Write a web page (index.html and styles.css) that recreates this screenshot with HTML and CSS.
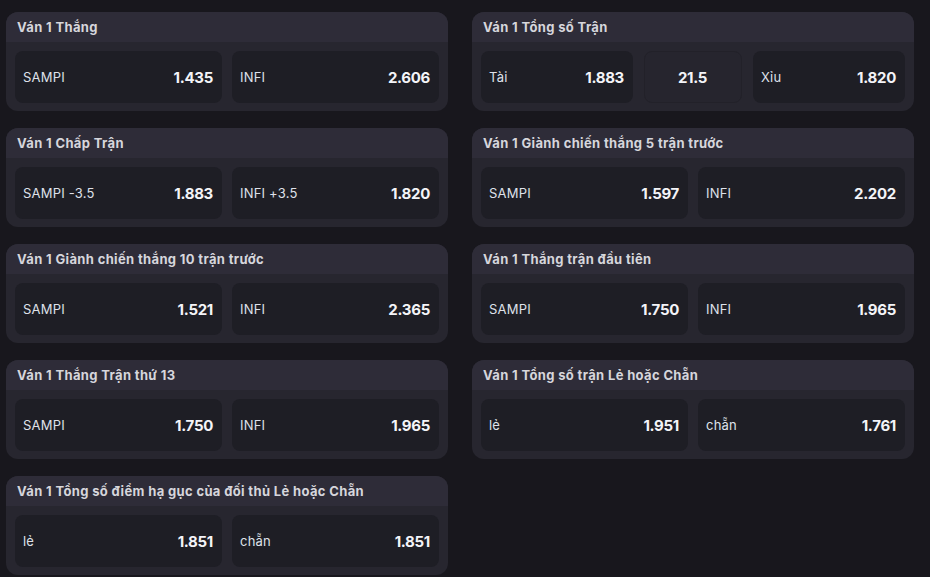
FILE: index.html
```html
<!doctype html>
<html lang="vi">
  <head>
    <meta charset="UTF-8" />
    <meta name="viewport" content="width=device-width, initial-scale=1.0" />
    <title>Kèo Ván 1</title>
    <link rel="stylesheet" href="styles.css">
  </head>
  <body>
    <main class="markets">
      <section class="market">
        <h3 class="market-title">Ván 1 Thắng</h3>
        <div class="odds">
          <div class="odd"><span class="label">SAMPI</span><span class="price">1.435</span></div>
          <div class="odd"><span class="label">INFI</span><span class="price">2.606</span></div>
        </div>
      </section>

      <section class="market">
        <h3 class="market-title">Ván 1 Tổng số Trận</h3>
        <div class="odds odds-3">
          <div class="odd"><span class="label">Tài</span><span class="price">1.883</span></div>
          <div class="odd line"><span class="price">21.5</span></div>
          <div class="odd"><span class="label">Xỉu</span><span class="price">1.820</span></div>
        </div>
      </section>

      <section class="market">
        <h3 class="market-title">Ván 1 Chấp Trận</h3>
        <div class="odds">
          <div class="odd"><span class="label">SAMPI -3.5</span><span class="price">1.883</span></div>
          <div class="odd"><span class="label">INFI +3.5</span><span class="price">1.820</span></div>
        </div>
      </section>

      <section class="market">
        <h3 class="market-title">Ván 1 Giành chiến thắng 5 trận trước</h3>
        <div class="odds">
          <div class="odd"><span class="label">SAMPI</span><span class="price">1.597</span></div>
          <div class="odd"><span class="label">INFI</span><span class="price">2.202</span></div>
        </div>
      </section>

      <section class="market">
        <h3 class="market-title">Ván 1 Giành chiến thắng 10 trận trước</h3>
        <div class="odds">
          <div class="odd"><span class="label">SAMPI</span><span class="price">1.521</span></div>
          <div class="odd"><span class="label">INFI</span><span class="price">2.365</span></div>
        </div>
      </section>

      <section class="market">
        <h3 class="market-title">Ván 1 Thắng trận đầu tiên</h3>
        <div class="odds">
          <div class="odd"><span class="label">SAMPI</span><span class="price">1.750</span></div>
          <div class="odd"><span class="label">INFI</span><span class="price">1.965</span></div>
        </div>
      </section>

      <section class="market">
        <h3 class="market-title">Ván 1 Thắng Trận thứ 13</h3>
        <div class="odds">
          <div class="odd"><span class="label">SAMPI</span><span class="price">1.750</span></div>
          <div class="odd"><span class="label">INFI</span><span class="price">1.965</span></div>
        </div>
      </section>

      <section class="market">
        <h3 class="market-title">Ván 1 Tổng số trận Lẻ hoặc Chẵn</h3>
        <div class="odds">
          <div class="odd"><span class="label">lẻ</span><span class="price">1.951</span></div>
          <div class="odd"><span class="label">chẵn</span><span class="price">1.761</span></div>
        </div>
      </section>

      <section class="market">
        <h3 class="market-title">Ván 1 Tổng số điểm hạ gục của đối thủ Lẻ hoặc Chẵn</h3>
        <div class="odds">
          <div class="odd"><span class="label">lẻ</span><span class="price">1.851</span></div>
          <div class="odd"><span class="label">chẵn</span><span class="price">1.851</span></div>
        </div>
      </section>
    </main>
  </body>
</html>
```

FILE: styles.css
```css
* {
  box-sizing: border-box;
  margin: 0;
  padding: 0;
}
body {
  font-family: Inter, 'Noto Sans', sans-serif;
  background: #18171d;
  color: #e4e4ea;
  padding: 12px 16px 0 6px;
}
.markets {
  display: grid;
  grid-template-columns: 1fr 1fr;
  column-gap: 24px;
  row-gap: 17px;
}
.market {
  background: #27262f;
  border-radius: 12px;
  overflow: hidden;
}
.market-title {
  height: 30px;
  line-height: 30px;
  padding: 0 11px;
  background: #2e2c38;
  font-size: 13px;
  font-weight: 700;
  letter-spacing: 0.35px;
  color: #d6d6dc;
}
.odds {
  display: grid;
  grid-template-columns: 1fr 1fr;
  gap: 10px;
  padding: 9px 9px 8px;
}
.odds-3 {
  grid-template-columns: 152px 1fr 152px;
  gap: 11px;
}
.odd {
  height: 52px;
  display: flex;
  align-items: center;
  justify-content: space-between;
  padding: 0 9px 0 8px;
  background: #1e1e25;
  border-radius: 8px;
}
.odd.line {
  justify-content: center;
  background: #26252e;
  border: 1px solid #222129;
}
.label {
  font-size: 13px;
  letter-spacing: 0.2px;
  color: #dfe1ea;
}
.price {
  font-size: 15px;
  font-weight: 700;
  letter-spacing: -0.3px;
  color: #f4f4f8;
}
```
